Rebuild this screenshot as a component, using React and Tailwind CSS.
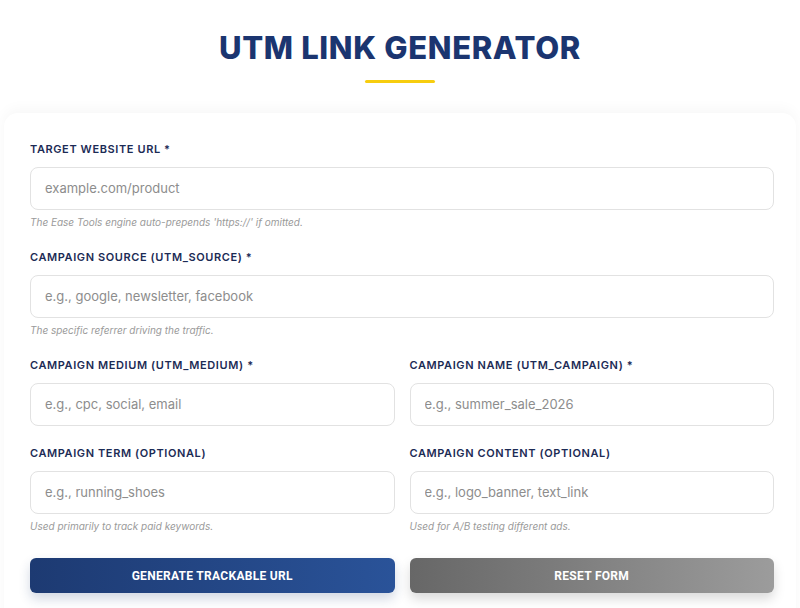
import React from 'react';

const font = { fontFamily: '"Inter", "Noto Sans", sans-serif' };

const Field = ({ label, placeholder, help }) => (
  <div className="flex flex-col mb-[19.5px]">
    <label className="text-[11px] leading-[16px] font-semibold uppercase tracking-[0.6px] text-[#1c2b55] mb-[9.5px]">
      {label}
    </label>
    <input
      type="text"
      placeholder={placeholder}
      className="h-[43px] w-full rounded-[8px] border-[1.5px] border-[#e2e2e2] bg-white px-[14px] text-[13px] text-[#333] placeholder:text-[#8d8d8d] outline-none"
    />
    {help && (
      <p className="mt-[5px] text-[10px] leading-[15px] italic text-[#9a9a9a]">{help}</p>
    )}
  </div>
);

export default function App() {
  return (
    <div className="h-screen bg-white overflow-hidden" style={font}>
      {/* Header */}
      <div className="flex flex-col items-center pt-[28px]">
        <h1 className="text-[31px] leading-[40px] font-extrabold tracking-[0.65px] text-[#1b3570]">
          UTM LINK GENERATOR
        </h1>
        <div className="mt-[12px] h-[3px] w-[70px] rounded-full bg-[#f7cd0f]" />
      </div>

      {/* Card */}
      <div className="ml-[4px] mr-[4px] mt-[30px] rounded-t-[14px] bg-white pl-[26px] pr-[22px] pt-[28px] pb-[40px] shadow-[0_-4px_14px_rgba(0,0,0,0.035)]">
        <Field
          label="Target Website URL *"
          placeholder="example.com/product"
          help="The Ease Tools engine auto-prepends 'https://' if omitted."
        />
        <Field
          label="Campaign Source (utm_source) *"
          placeholder="e.g., google, newsletter, facebook"
          help="The specific referrer driving the traffic."
        />
        <div className="grid grid-cols-2 gap-x-[15px]">
          <Field label="Campaign Medium (utm_medium) *" placeholder="e.g., cpc, social, email" />
          <Field label="Campaign Name (utm_campaign) *" placeholder="e.g., summer_sale_2026" />
          <Field
            label="Campaign Term (Optional)"
            placeholder="e.g., running_shoes"
            help="Used primarily to track paid keywords."
          />
          <Field
            label="Campaign Content (Optional)"
            placeholder="e.g., logo_banner, text_link"
            help="Used for A/B testing different ads."
          />
        </div>
        <div className="grid grid-cols-2 gap-x-[15px] mt-[5px]">
          <button
            className="h-[35px] rounded-[6px] bg-gradient-to-r from-[#1d3a72] to-[#2a5399] text-white text-[12px] font-bold uppercase tracking-[0.3px] shadow-[0_6px_12px_rgba(30,58,114,0.2)]"
            style={{ fontFamily: '"Roboto", sans-serif' }}
          >
            Generate Trackable URL
          </button>
          <button
            className="h-[35px] rounded-[6px] bg-gradient-to-r from-[#676767] to-[#9c9c9c] text-white text-[12px] font-bold uppercase tracking-[0.3px] shadow-[0_6px_12px_rgba(0,0,0,0.15)]"
            style={{ fontFamily: '"Roboto", sans-serif' }}
          >
            Reset Form
          </button>
        </div>
      </div>
    </div>
  );
}
